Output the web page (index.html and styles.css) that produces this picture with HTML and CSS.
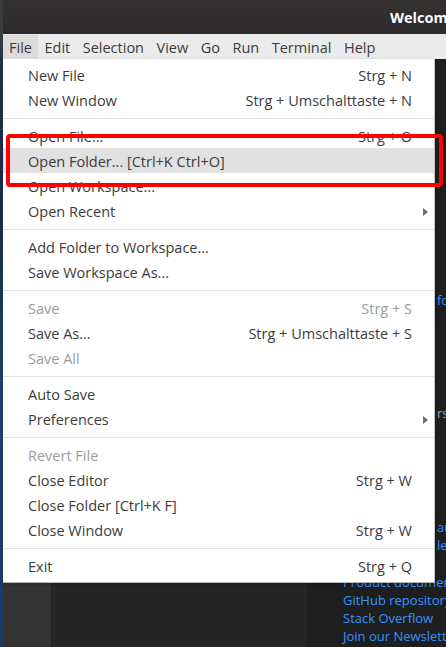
FILE: index.html
```html
<!DOCTYPE html>
<html lang="de">
<head>
<meta charset="utf-8">
<title>Welcome - Visual Studio Code</title>
<link rel="stylesheet" href="styles.css">
</head>
<body>
  <div class="desktop-strip"></div>
  <div class="window">
    <div class="titlebar"><span class="title">Welcome - Visual Studio Code</span></div>
    <div class="menubar">
      <span class="mb-item active">File</span>
      <span class="mb-item">Edit</span>
      <span class="mb-item">Selection</span>
      <span class="mb-item">View</span>
      <span class="mb-item">Go</span>
      <span class="mb-item">Run</span>
      <span class="mb-item">Terminal</span>
      <span class="mb-item">Help</span>
    </div>
    <div class="workbench">
      <div class="activitybar"></div>
      <div class="sidebar"></div>
      <div class="editor">
        <div class="welcome">
          <div class="col-help">
            <a class="link">Product documentation</a>
            <a class="link">GitHub repository</a>
            <a class="link">Stack Overflow</a>
            <a class="link">Join our Newsletter</a>
          </div>
          <div class="col-custom">
            <a class="link l1">for JavaScript</a>
            <span class="desc l2">rs and keybindings</span>
            <a class="link l3">and run all commands</a>
            <a class="link l4">learn the interface</a>
          </div>
        </div>
      </div>
    </div>
  </div>

  <div class="menu">
    <div class="mi"><span>New File</span><span class="kb">Strg + N</span><span></span></div>
    <div class="mi"><span>New Window</span><span class="kb">Strg + Umschalttaste + N</span><span></span></div>
    <div class="sep"></div>
    <div class="mi"><span>Open File...</span><span class="kb">Strg + O</span><span></span></div>
    <div class="mi hover"><span>Open Folder... [Ctrl+K Ctrl+O]</span><span class="kb"></span><span></span></div>
    <div class="mi"><span>Open Workspace...</span><span class="kb"></span><span></span></div>
    <div class="mi"><span>Open Recent</span><span class="kb"></span><span class="arrow"></span></div>
    <div class="sep"></div>
    <div class="mi"><span>Add Folder to Workspace...</span><span class="kb"></span><span></span></div>
    <div class="mi"><span>Save Workspace As...</span><span class="kb"></span><span></span></div>
    <div class="sep"></div>
    <div class="mi disabled"><span>Save</span><span class="kb">Strg + S</span><span></span></div>
    <div class="mi"><span>Save As...</span><span class="kb">Strg + Umschalttaste + S</span><span></span></div>
    <div class="mi disabled"><span>Save All</span><span class="kb"></span><span></span></div>
    <div class="sep"></div>
    <div class="mi"><span>Auto Save</span><span class="kb"></span><span></span></div>
    <div class="mi"><span>Preferences</span><span class="kb"></span><span class="arrow"></span></div>
    <div class="sep"></div>
    <div class="mi disabled"><span>Revert File</span><span class="kb"></span><span></span></div>
    <div class="mi"><span>Close Editor</span><span class="kb">Strg + W</span><span></span></div>
    <div class="mi"><span>Close Folder [Ctrl+K F]</span><span class="kb"></span><span></span></div>
    <div class="mi"><span>Close Window</span><span class="kb">Strg + W</span><span></span></div>
    <div class="sep"></div>
    <div class="mi"><span>Exit</span><span class="kb">Strg + Q</span><span></span></div>
  </div>

  <div class="annotation"></div>
</body>
</html>
```
FILE: styles.css
```css
* { box-sizing: border-box; }

html, body {
  margin: 0;
  padding: 0;
  width: 446px;
  height: 647px;
  overflow: hidden;
}

body {
  position: relative;
  display: flex;
  font-family: "Open Sans", "Noto Sans", sans-serif;
  background: #1e1e1e;
}

.desktop-strip {
  width: 3px;
  flex: none;
  background: linear-gradient(180deg, #3b3b3b 0px, #3b3b3b 34px, #22324c 60px, #1b2c4a 200px, #24406a 400px, #1e3d66 560px, #1a3a60 647px);
}

.window {
  flex: 1;
  display: flex;
  flex-direction: column;
  min-width: 0;
}

.titlebar {
  height: 34px;
  flex: none;
  background: linear-gradient(180deg, #353232, #2b2929);
  padding-left: 387px;
  white-space: nowrap;
  overflow: hidden;
  display: flex;
  align-items: center;
}

.title {
  color: #ffffff;
  font-weight: 700;
  font-size: 14.5px;
}

.menubar {
  height: 25px;
  flex: none;
  background: #ebebeb;
  display: flex;
  align-items: stretch;
  color: #3c3c3c;
  font-size: 14.5px;
  white-space: nowrap;
  overflow: hidden;
}

.mb-item {
  padding: 2px 6px 0 6px;
  display: flex;
  align-items: center;
}

.mb-item + .mb-item { margin-left: 0.5px; }

.mb-item.active {
  background: #dcdcdc;
  margin: 1px 0 1px 0;
}

.workbench {
  flex: 1;
  display: flex;
  min-height: 0;
}

.activitybar {
  width: 48px;
  flex: none;
  background: #333333;
}

.sidebar {
  width: 256px;
  flex: none;
  background: #252526;
}

.editor {
  flex: 1;
  background: #1e1e1e;
  overflow: hidden;
  min-width: 0;
}

.welcome {
  display: grid;
  grid-template-columns: 94px 200px;
  padding-left: 36px;
  font-size: 13px;
  line-height: 18px;
  white-space: nowrap;
}

.col-help {
  display: flex;
  flex-direction: column;
  padding-top: 514px;
}

.col-custom {
  display: flex;
  flex-direction: column;
  padding-top: 232px;
}

.link {
  color: #3794ff;
  text-decoration: none;
}

.desc { color: #8aa4c8; }

.l2 { margin-top: 95px; }
.l3 { margin-top: 96px; }

.menu {
  position: absolute;
  left: 3px;
  top: 59px;
  width: 432px;
  background: #ffffff;
  border-right: 1px solid #c4c4c4;
  border-bottom: 1px solid #b8b8b8;
  padding: 3px 0 4px 0;
  color: #3c3c3c;
  font-size: 14.5px;
  box-shadow: 0 1px 3px rgba(0, 0, 0, 0.25);
}

.mi {
  height: 25px;
  display: grid;
  grid-template-columns: 1fr auto 22px;
  align-items: center;
  padding: 2px 0 0 25px;
  white-space: nowrap;
}

.mi.hover { background: #e1e1e1; }

.mi.disabled { color: #9b9b9b; }

.kb { text-align: right; }

.arrow {
  width: 0;
  height: 0;
  margin-left: 11px;
  border-top: 4px solid transparent;
  border-bottom: 4px solid transparent;
  border-left: 5px solid #707070;
}

.sep {
  height: 1px;
  background: #e2e2e2;
  margin: 6px 0 4px 0;
}

.annotation {
  position: absolute;
  left: 6px;
  top: 134px;
  width: 437px;
  height: 53px;
  border: 4px solid #ff0000;
  border-radius: 4px;
}
```
